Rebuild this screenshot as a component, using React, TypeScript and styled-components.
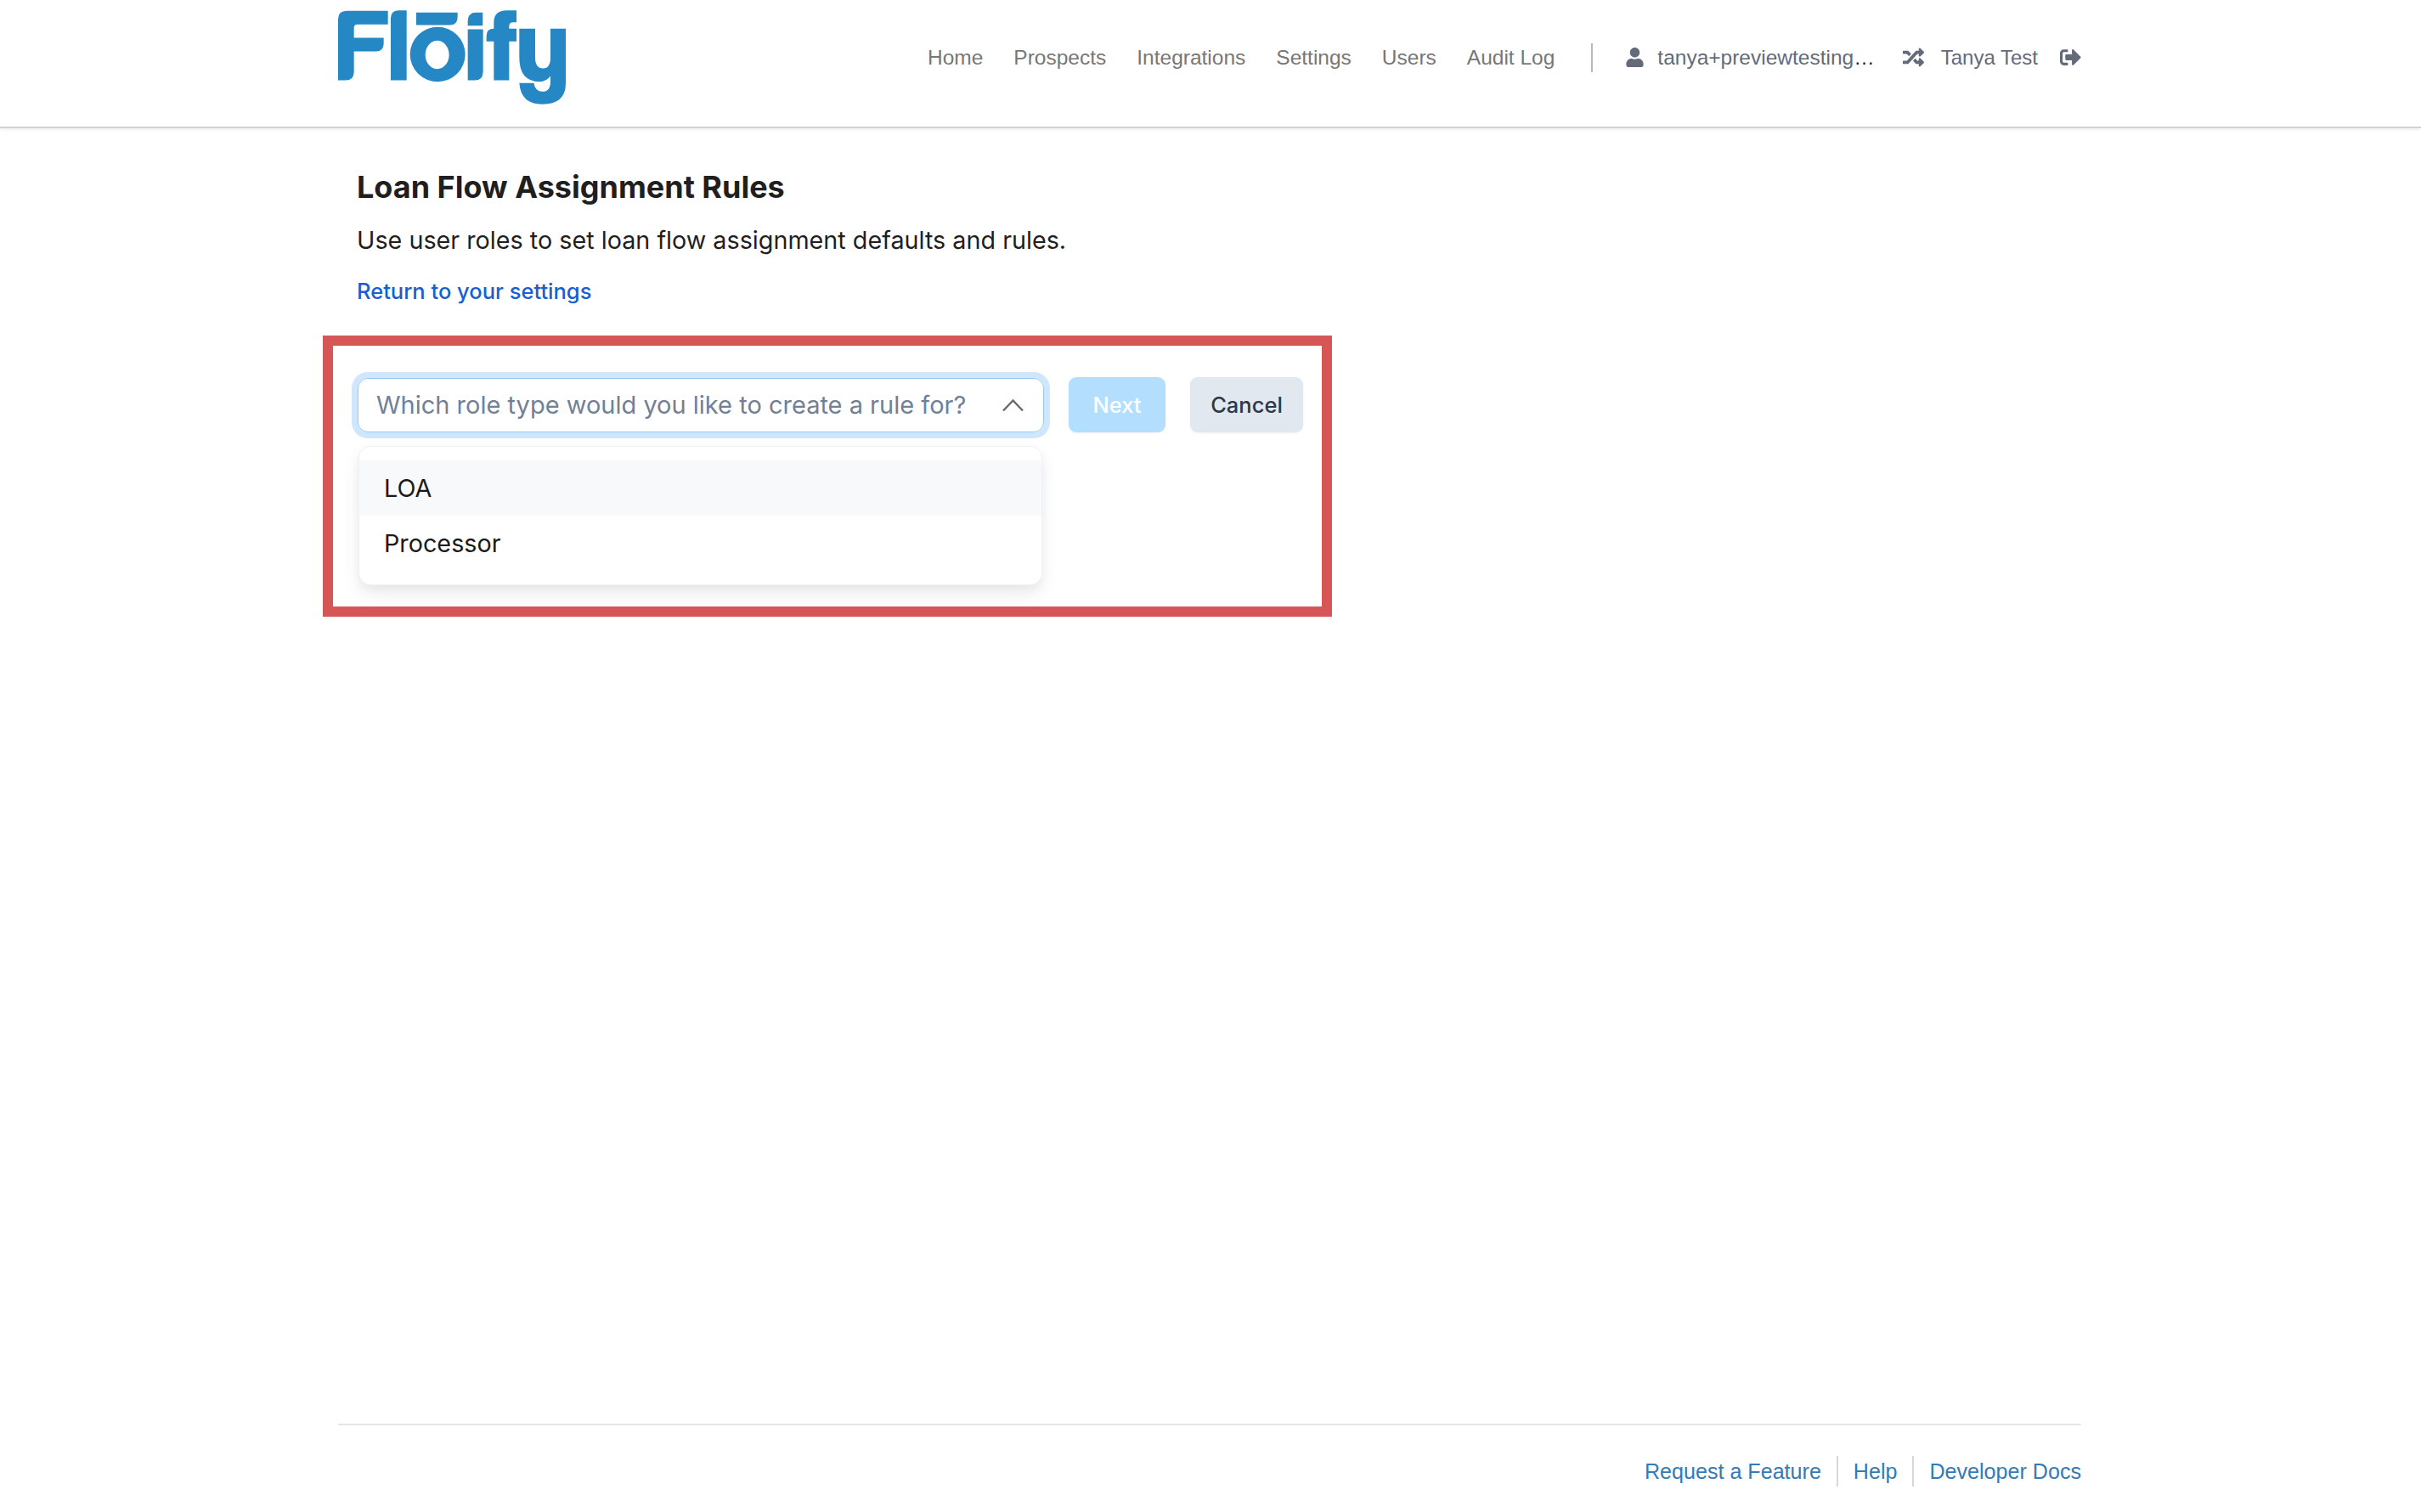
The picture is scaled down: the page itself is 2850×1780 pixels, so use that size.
import React from "react";
import styled, { createGlobalStyle } from "styled-components";
import { FaUser, FaRandom, FaSignOutAlt } from "react-icons/fa";

const Global = createGlobalStyle`
  * { box-sizing: border-box; }
  html, body { margin: 0; padding: 0; background: #fff; }
  body { font-family: Inter, "Liberation Sans", sans-serif; }
`;

const Page = styled.div`
  min-height: 100vh;
  display: flex;
  flex-direction: column;
  overflow: hidden;
`;

const Header = styled.header`
  height: 151px;
  flex: none;
  padding: 0 400px 14px 398px;
  display: flex;
  align-items: center;
  border-bottom: 2px solid #d2d2d2;
  box-shadow: 0 2px 3px rgba(0, 0, 0, 0.06);
  font-family: "Liberation Sans", Arial, sans-serif;
  font-size: 24.5px;
`;

const LogoMark = styled.svg`
  width: 268px;
  height: 111px;
  flex: none;
  fill: #2587c4;
`;

const MainNav = styled.nav`
  margin-left: auto;
  display: flex;
  gap: 36px;
  color: #777;
`;

const NavDivider = styled.span`
  width: 2px;
  height: 34px;
  background: #b9b9b9;
  margin: 0 38px 0 43px;
`;

const UserItem = styled.span<{ $gap: number; $after: number }>`
  display: inline-flex;
  align-items: center;
  gap: ${(p) => p.$gap}px;
  margin-right: ${(p) => p.$after}px;
  color: #636b7b;
  white-space: nowrap;
  svg { flex: none; }
`;

const UserName = styled.span`
  font-size: 24px;
`;

const Dots = styled.span`
  color: #222;
`;

const Main = styled.main`
  flex: 1;
  padding-left: 380px;
`;

const Intro = styled.div`
  padding: 47px 0 0 40px;
`;

const Title = styled.h1`
  margin: 0;
  font-size: 36px;
  line-height: 44px;
  font-weight: 700;
  color: #1f1f1f;
`;

const Lead = styled.p`
  margin: 19px 0 0;
  font-size: 28.75px;
  line-height: 44px;
  color: #1f1f1f;
`;

const BackLink = styled.a`
  display: block;
  margin-top: 18px;
  font-size: 25.5px;
  line-height: 40px;
  font-weight: 500;
  color: #1a5fd0;
`;

const Highlight = styled.section`
  width: 1188px;
  height: 331px;
  margin-top: 32px;
  padding: 37px 0 0 29px;
  border: 12px solid #d65656;
`;

const Row = styled.div`
  display: flex;
  align-items: center;
  gap: 29px;
`;

const Select = styled.div`
  width: 808px;
  height: 64px;
  padding: 0 22px 0 21px;
  display: flex;
  align-items: center;
  justify-content: space-between;
  border: 1.5px solid #90cdf4;
  border-radius: 12px;
  box-shadow: 0 0 0 7px #cfe6fd;
  font-size: 29px;
  color: #718096;
  white-space: nowrap;
`;

const Button = styled.button<{ $primary?: boolean }>`
  height: 65px;
  width: ${(p) => (p.$primary ? 114 : 133)}px;
  padding: 0;
  border: 0;
  border-radius: 9px;
  font-family: inherit;
  font-size: 25.5px;
  font-weight: 500;
  background: ${(p) => (p.$primary ? "#b3defe" : "#e2e8f0")};
  color: ${(p) => (p.$primary ? "#fff" : "#2d3748")};
  box-shadow: 0 1px 3px rgba(0, 0, 0, 0.06);
`;

const Menu = styled.ul`
  list-style: none;
  width: 805px;
  margin: 16px 0 0 1px;
  padding: 16px 0;
  border: 1px solid #eef1f7;
  border-radius: 14px;
  background: #fff;
  box-shadow: 0 10px 20px rgba(0, 0, 0, 0.08), 0 4px 8px rgba(0, 0, 0, 0.03);
`;

const MenuItem = styled.li<{ $active?: boolean }>`
  height: 65px;
  padding-left: 29px;
  display: flex;
  align-items: center;
  font-size: 28.75px;
  color: #1a1a1a;
  background: ${(p) => (p.$active ? "#f8f9fb" : "transparent")};
`;

const Footer = styled.footer`
  flex: none;
  margin: 0 400px 0 398px;
  height: 104px;
  padding-top: 36px;
  border-top: 2px solid #e6e6e6;
  display: flex;
  justify-content: flex-end;
  align-items: flex-start;
  font-family: "Liberation Sans", Arial, sans-serif;
  font-size: 25.1px;
`;

const FooterLink = styled.a`
  height: 36px;
  line-height: 36px;
  color: #337ab7;
  padding: 0 0 0 18px;
  margin-left: 18px;
  border-left: 2px solid #d8d8d8;
  &:first-child { border-left: 0; padding-left: 0; margin-left: 0; }
`;

export default function App() {
  return (
    <Page>
      <Global />
      <Header>
        <LogoMark viewBox="54 38 804 332" role="img" aria-label="Floify">
          <path d="M54 70Q54 40 84 40H230V88H122Q110 88 110 100V135H215V155Q215 183 187 183H110V255Q110 285 80 285H54Z" />
          <path d="M240 285V65Q240 38 270 38H296V285Z" />
          <path d="M330 46H476V62Q476 90 448 90H330Z" />
          <path
            fillRule="evenodd"
            d="M308 193.5A97.5 96.5 0 1 1 503 193.5A97.5 96.5 0 1 1 308 193.5ZM362 195A42 50 0 1 0 446 195A42 50 0 1 0 362 195Z"
          />
          <path d="M512 92V75Q512 46 542 46H565V92Z" />
          <path d="M512 285V105H566V255Q566 285 536 285Z" />
          <path d="M604 285V148H578V128Q578 103 604 103V80Q604 38 650 38H684V80H672Q658 80 658 95V103H684V148H658V285Z" />
          <path d="M694 103H750V205Q750 243 778 243Q804 243 804 205V103H858V295Q858 370 775 370Q700 370 694 295H745Q750 325 775 325Q804 325 804 290V270Q790 290 765 290Q694 290 694 205Z" />
        </LogoMark>
        <MainNav>
          <span>Home</span>
          <span>Prospects</span>
          <span>Integrations</span>
          <span>Settings</span>
          <span>Users</span>
          <span>Audit Log</span>
        </MainNav>
        <NavDivider />
        <UserItem $gap={15} $after={33}>
          <FaUser size={23} />
          <span>tanya+previewtesting<Dots>…</Dots></span>
        </UserItem>
        <UserItem $gap={20} $after={26}>
          <FaRandom size={25} />
          <UserName>Tanya Test</UserName>
        </UserItem>
        <UserItem $gap={0} $after={0}>
          <FaSignOutAlt size={25} />
        </UserItem>
      </Header>
      <Main>
        <Intro>
          <Title>Loan Flow Assignment Rules</Title>
          <Lead>Use user roles to set loan flow assignment defaults and rules.</Lead>
          <BackLink>Return to your settings</BackLink>
        </Intro>
        <Highlight>
          <Row>
            <Select>
              <span>Which role type would you like to create a rule for?</span>
              <svg width="27" height="16" viewBox="0 0 27 16" fill="none" stroke="#6b6b6b" strokeWidth="2.5">
                <path d="M2 14.5L13.5 2.5L25 14.5" />
              </svg>
            </Select>
            <Button $primary>Next</Button>
            <Button>Cancel</Button>
          </Row>
          <Menu>
            <MenuItem $active>LOA</MenuItem>
            <MenuItem>Processor</MenuItem>
          </Menu>
        </Highlight>
      </Main>
      <Footer>
        <FooterLink>Request a Feature</FooterLink>
        <FooterLink>Help</FooterLink>
        <FooterLink>Developer Docs</FooterLink>
      </Footer>
    </Page>
  );
}
